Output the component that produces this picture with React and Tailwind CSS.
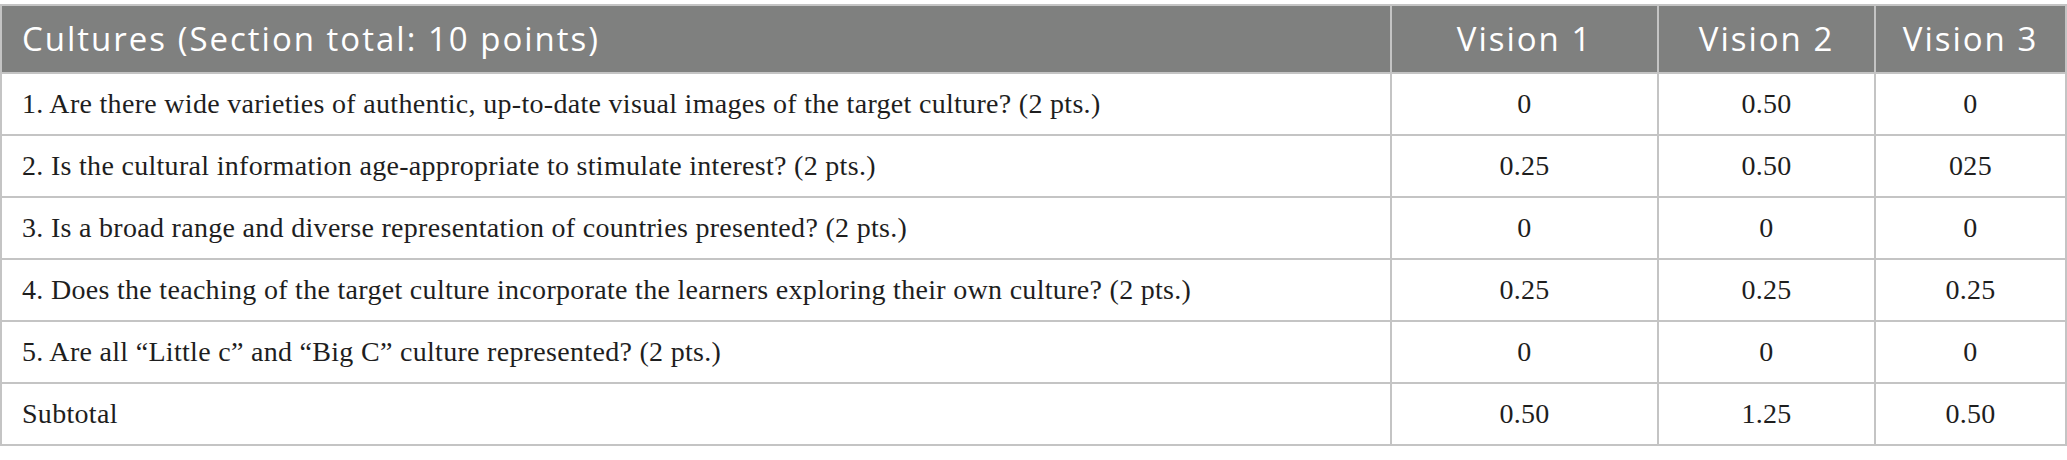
const rows = [
  ['1. Are there wide varieties of authentic, up-to-date visual images of the target culture? (2 pts.)', '0', '0.50', '0'],
  ['2. Is the cultural information age-appropriate to stimulate interest? (2 pts.)', '0.25', '0.50', '025'],
  ['3. Is a broad range and diverse representation of countries presented? (2 pts.)', '0', '0', '0'],
  ['4. Does the teaching of the target culture incorporate the learners exploring their own culture? (2 pts.)', '0.25', '0.25', '0.25'],
  ['5. Are all \u201cLittle c\u201d and \u201cBig C\u201d culture represented? (2 pts.)', '0', '0', '0'],
  ['Subtotal', '0.50', '1.25', '0.50'],
]

export default function App() {
  return (
    <div className="w-[2067px] bg-white pt-1">
      <table className="w-full table-fixed border-collapse border-2 border-[#c4c4c4]">
        <colgroup>
          <col className="w-[1390px]" />
          <col className="w-[267px]" />
          <col className="w-[217px]" />
          <col />
        </colgroup>
        <thead>
          <tr className="h-[68px] bg-[#7f807f] text-white font-['Open_Sans',sans-serif] text-[33px] tracking-[2px]">
            <th className="border-2 border-[#c4c4c4] text-left font-normal pl-[20px]">
              Cultures (Section total: 10 points)
            </th>
            <th className="border-2 border-[#c4c4c4] font-normal">Vision 1</th>
            <th className="border-2 border-[#c4c4c4] font-normal">Vision 2</th>
            <th className="border-2 border-[#c4c4c4] font-normal">Vision 3</th>
          </tr>
        </thead>
        <tbody className="font-['Liberation_Serif',serif] text-[28px] tracking-[0.3px] text-[#1e1e1e]">
          {rows.map((r) => (
            <tr key={r[0]} className="h-[62px]">
              <td className="border-2 border-[#c4c4c4] pl-[20px]">{r[0]}</td>
              <td className="border-2 border-[#c4c4c4] text-center">{r[1]}</td>
              <td className="border-2 border-[#c4c4c4] text-center">{r[2]}</td>
              <td className="border-2 border-[#c4c4c4] text-center">{r[3]}</td>
            </tr>
          ))}
        </tbody>
      </table>
    </div>
  )
}
